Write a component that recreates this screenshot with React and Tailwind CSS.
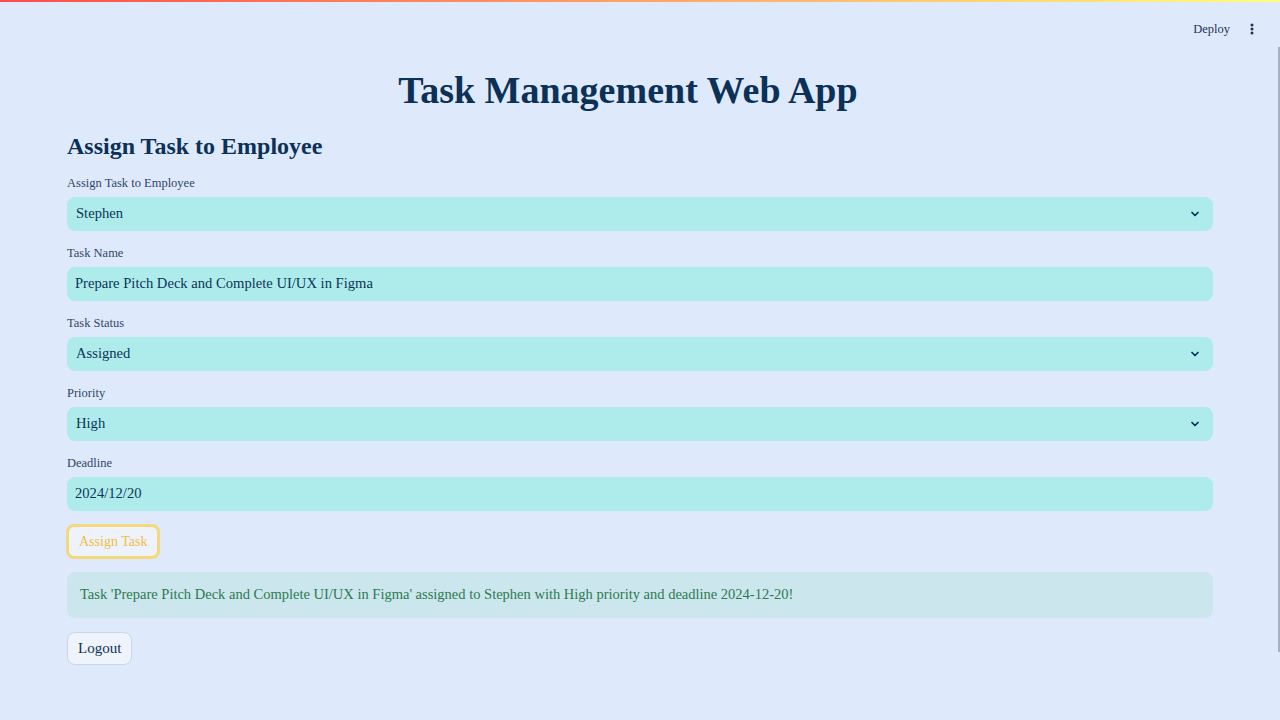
import React from "react";

const serif = { fontFamily: '"Liberation Serif", "DejaVu Serif", serif' };

function Chevron() {
  return (
    <svg width="12" height="12" viewBox="0 0 24 24" fill="none" stroke="#0b3157" strokeWidth="3.5" strokeLinecap="round" strokeLinejoin="round">
      <path d="M6 9l6 6 6-6" />
    </svg>
  );
}

function Field({ label, value, select }) {
  return (
    <div className="flex flex-col">
      <div className="text-[12.5px] leading-[16px] text-[#31456a] mb-[6px]">{label}</div>
      <div className="h-[34px] rounded-[8px] bg-[#aeecec] flex items-center justify-between pl-[8px] pr-[12px]">
        <span className={`text-[14.6px] text-[#0c3556] ${select ? "pl-[1px]" : ""}`}>{value}</span>
        {select && <Chevron />}
      </div>
    </div>
  );
}

export default function App() {
  return (
    <div className="relative w-[1280px] h-[720px] bg-[#dfe9fc] overflow-hidden text-[#0b3157]" style={serif}>
      <div className="h-[2px] w-full" style={{ background: "linear-gradient(90deg, #ff4b4b, #fffd80)" }} />
      <div className="flex justify-end items-center h-[58px] pr-[26px] -mt-[2px] gap-[20px]">
        <span className="text-[12.5px] text-[#1d3557]">Deploy</span>
        <svg width="4" height="12" viewBox="0 0 4 12" fill="#1d3557">
          <circle cx="2" cy="2" r="1.5" />
          <circle cx="2" cy="6" r="1.5" />
          <circle cx="2" cy="10" r="1.5" />
        </svg>
      </div>
      <div className="absolute right-0 top-[47px] w-[2px] h-[605px] bg-[#a6b0c0]" />
      <div className="mx-[67px] flex flex-col">
        <h1 className="text-center font-bold text-[38px] leading-[44px] mt-[10px] pr-[24px]">Task Management Web App</h1>
        <h2 className="font-bold text-[24px] leading-[30px] mt-[19px]">Assign Task to Employee</h2>
        <div className="flex flex-col gap-[14px] mt-[14px]">
          <Field label="Assign Task to Employee" value="Stephen" select />
          <Field label="Task Name" value="Prepare Pitch Deck and Complete UI/UX in Figma" />
          <Field label="Task Status" value="Assigned" select />
          <Field label="Priority" value="High" select />
          <Field label="Deadline" value="2024/12/20" />
        </div>
        <div className="mt-[13px]">
          <button className="h-[35px] px-[10px] -ml-[1px] rounded-[8px] border-[3px] border-[#f5d77c] bg-[#eef2fb] text-[14px] text-[#f2bd45]">Assign Task</button>
        </div>
        <div className="mt-[13px] h-[46px] rounded-[8px] bg-[#cbe6ec] flex items-center px-[13px] text-[14.5px] text-[#2b7a50]">
          Task 'Prepare Pitch Deck and Complete UI/UX in Figma' assigned to Stephen with High priority and deadline 2024-12-20!
        </div>
        <div className="mt-[14px]">
          <button className="h-[33px] px-[10px] rounded-[8px] border border-[#cbd5e6] bg-[#eef3fc] text-[15px] text-[#0b3157]">Logout</button>
        </div>
      </div>
    </div>
  );
}
